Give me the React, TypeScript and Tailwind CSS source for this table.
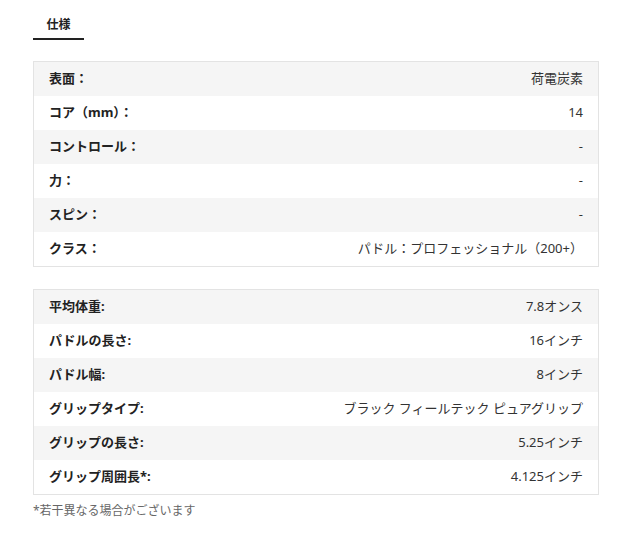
import React from "react";

// ─── DATA ─────────────────────────────────────────────────────────────────────

interface SpecRow {
  label: string;
  value: string;
}

const coreSpecs: SpecRow[] = [
  { label: "表面：", value: "荷電炭素" },
  { label: "コア（mm）：", value: "14" },
  { label: "コントロール：", value: "-" },
  { label: "力：", value: "-" },
  { label: "スピン：", value: "-" },
  { label: "クラス：", value: "パドル：プロフェッショナル（200+）" },
];

const sizeSpecs: SpecRow[] = [
  { label: "平均体重:", value: "7.8オンス" },
  { label: "パドルの長さ:", value: "16インチ" },
  { label: "パドル幅:", value: "8インチ" },
  { label: "グリップタイプ:", value: "ブラック フィールテック ピュアグリップ" },
  { label: "グリップの長さ:", value: "5.25インチ" },
  { label: "グリップ周囲長*:", value: "4.125インチ" },
];

function SpecTable({ rows }: { rows: SpecRow[] }) {
  return (
    <div className="border border-[#e3e3e3]">
      {rows.map(({ label, value }, i) => (
        <div
          key={label}
          className={[
            "flex h-[34px] items-center justify-between px-[15px]",
            i % 2 === 0 ? "bg-[#f5f5f5]" : "bg-white",
          ].join(" ")}
        >
          <span className="text-[13px] font-bold text-[#222]">{label}</span>
          <span className="text-[13px] text-[#333]">{value}</span>
        </div>
      ))}
    </div>
  );
}

export default function App() {
  return (
    <div
      className="flex min-h-[544px] w-[640px] flex-col bg-white pl-[33px] pr-[41px] text-[#222]"
      style={{ fontFamily: '"Noto Sans", "Noto Sans CJK JP", sans-serif' }}
    >
      <div className="flex pt-[17px]">
        <div className="w-[51px] border-b-2 border-[#222] pb-[5px] text-center text-[12px] font-bold leading-[16px]">
          仕様
        </div>
      </div>

      <div className="mt-[21px]">
        <SpecTable rows={coreSpecs} />
      </div>

      <div className="mt-[22px]">
        <SpecTable rows={sizeSpecs} />
      </div>

      <p className="mt-[8px] text-[12px] leading-[16px] text-[#666]">*若干異なる場合がございます</p>
    </div>
  );
}
